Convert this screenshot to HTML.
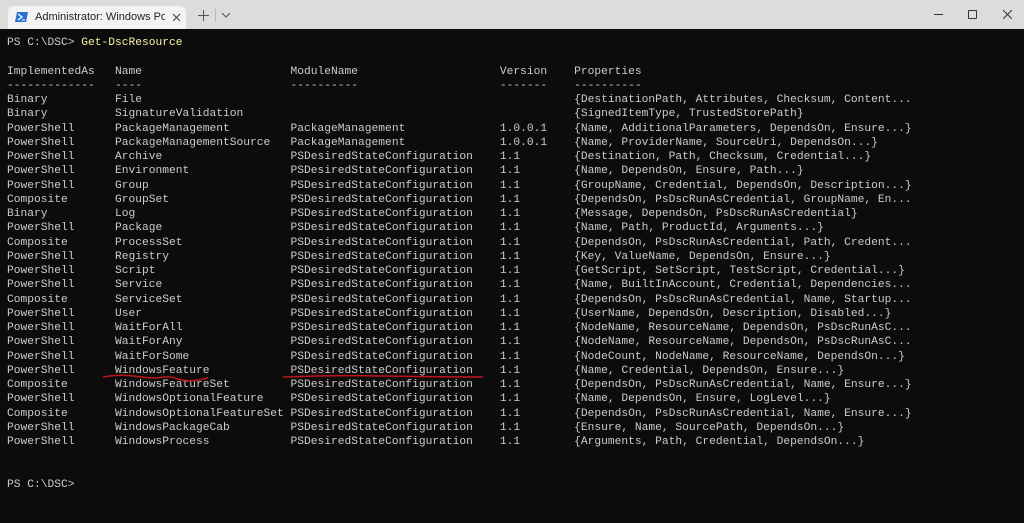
<!DOCTYPE html>
<html><head><meta charset="utf-8"><style>
body{margin:0;width:1024px;height:523px;overflow:hidden;background:#0c0c0c;font-family:"Liberation Sans",sans-serif}
.tb{position:absolute;left:0;top:0;width:1024px;height:29px;background:#dcdcdc}
.tab{position:absolute;left:8px;top:6px;width:178px;height:23px;background:#f3f3f3;border-radius:6px 6px 0 0}
.tab span{position:absolute;left:27px;top:5px;font-size:11px;color:#222;white-space:nowrap;width:130px;overflow:hidden}
pre{position:absolute;left:7px;top:36px;margin:0;font-family:"Liberation Mono",monospace;font-size:11.25px;line-height:14.25px;color:#cccccc}
.y{color:#f9f1a5}
</style></head><body>
<div class="tb">
 <div class="tab">
  <svg style="position:absolute;left:7px;top:5px" width="13" height="12"><path d="M2 1h11l-2 10H0z" fill="#2b6fd6"/><path d="M3 3l4 3-4 3" stroke="#fff" fill="none" stroke-width="1.3"/><path d="M7 9h3" stroke="#fff"/></svg>
  <span>Administrator: Windows Powe</span>
  <svg style="position:absolute;left:164px;top:7px" width="9" height="9"><path d="M1 1l7 7M8 1L1 8" stroke="#444" stroke-width="1.1"/></svg>
 </div>
 <svg style="position:absolute;left:198px;top:10px" width="11" height="11"><path d="M5.5 0v11M0 5.5h11" stroke="#555"/></svg>
 <div style="position:absolute;left:215px;top:8px;width:1px;height:14px;background:#bbb"></div>
 <svg style="position:absolute;left:222px;top:13px" width="8" height="5"><path d="M0 0l4 4 4-4" stroke="#555" fill="none"/></svg>
 <div style="position:absolute;left:934px;top:14px;width:9px;height:1px;background:#333"></div>
 <div style="position:absolute;left:968px;top:10px;width:7px;height:7px;border:1px solid #333;border-radius:1px"></div>
 <svg style="position:absolute;left:1003px;top:10px" width="9" height="9"><path d="M0 0l9 9M9 0L0 9" stroke="#333"/></svg>
</div>
<pre>PS C:\DSC&gt; <span class="y">Get-DscResource</span>

ImplementedAs   Name                      ModuleName                     Version    Properties
-------------   ----                      ----------                     -------    ----------
Binary          File                                                                {DestinationPath, Attributes, Checksum, Content...
Binary          SignatureValidation                                                 {SignedItemType, TrustedStorePath}
PowerShell      PackageManagement         PackageManagement              1.0.0.1    {Name, AdditionalParameters, DependsOn, Ensure...}
PowerShell      PackageManagementSource   PackageManagement              1.0.0.1    {Name, ProviderName, SourceUri, DependsOn...}
PowerShell      Archive                   PSDesiredStateConfiguration    1.1        {Destination, Path, Checksum, Credential...}
PowerShell      Environment               PSDesiredStateConfiguration    1.1        {Name, DependsOn, Ensure, Path...}
PowerShell      Group                     PSDesiredStateConfiguration    1.1        {GroupName, Credential, DependsOn, Description...}
Composite       GroupSet                  PSDesiredStateConfiguration    1.1        {DependsOn, PsDscRunAsCredential, GroupName, En...
Binary          Log                       PSDesiredStateConfiguration    1.1        {Message, DependsOn, PsDscRunAsCredential}
PowerShell      Package                   PSDesiredStateConfiguration    1.1        {Name, Path, ProductId, Arguments...}
Composite       ProcessSet                PSDesiredStateConfiguration    1.1        {DependsOn, PsDscRunAsCredential, Path, Credent...
PowerShell      Registry                  PSDesiredStateConfiguration    1.1        {Key, ValueName, DependsOn, Ensure...}
PowerShell      Script                    PSDesiredStateConfiguration    1.1        {GetScript, SetScript, TestScript, Credential...}
PowerShell      Service                   PSDesiredStateConfiguration    1.1        {Name, BuiltInAccount, Credential, Dependencies...
Composite       ServiceSet                PSDesiredStateConfiguration    1.1        {DependsOn, PsDscRunAsCredential, Name, Startup...
PowerShell      User                      PSDesiredStateConfiguration    1.1        {UserName, DependsOn, Description, Disabled...}
PowerShell      WaitForAll                PSDesiredStateConfiguration    1.1        {NodeName, ResourceName, DependsOn, PsDscRunAsC...
PowerShell      WaitForAny                PSDesiredStateConfiguration    1.1        {NodeName, ResourceName, DependsOn, PsDscRunAsC...
PowerShell      WaitForSome               PSDesiredStateConfiguration    1.1        {NodeCount, NodeName, ResourceName, DependsOn...}
PowerShell      WindowsFeature            PSDesiredStateConfiguration    1.1        {Name, Credential, DependsOn, Ensure...}
Composite       WindowsFeatureSet         PSDesiredStateConfiguration    1.1        {DependsOn, PsDscRunAsCredential, Name, Ensure...}
PowerShell      WindowsOptionalFeature    PSDesiredStateConfiguration    1.1        {Name, DependsOn, Ensure, LogLevel...}
Composite       WindowsOptionalFeatureSet PSDesiredStateConfiguration    1.1        {DependsOn, PsDscRunAsCredential, Name, Ensure...}
PowerShell      WindowsPackageCab         PSDesiredStateConfiguration    1.1        {Ensure, Name, SourcePath, DependsOn...}
PowerShell      WindowsProcess            PSDesiredStateConfiguration    1.1        {Arguments, Path, Credential, DependsOn...}


PS C:\DSC&gt;</pre>
<svg style="position:absolute;left:0;top:370px" width="1024" height="15"><path d="M103 7q15-3 30-1t25 2q10-3 20 1t30-1" stroke="#c0141c" stroke-width="1.5" fill="none"/><path d="M283 7q50-2 100-1t100 1" stroke="#c0141c" stroke-width="1.5" fill="none"/></svg>
</body></html>
